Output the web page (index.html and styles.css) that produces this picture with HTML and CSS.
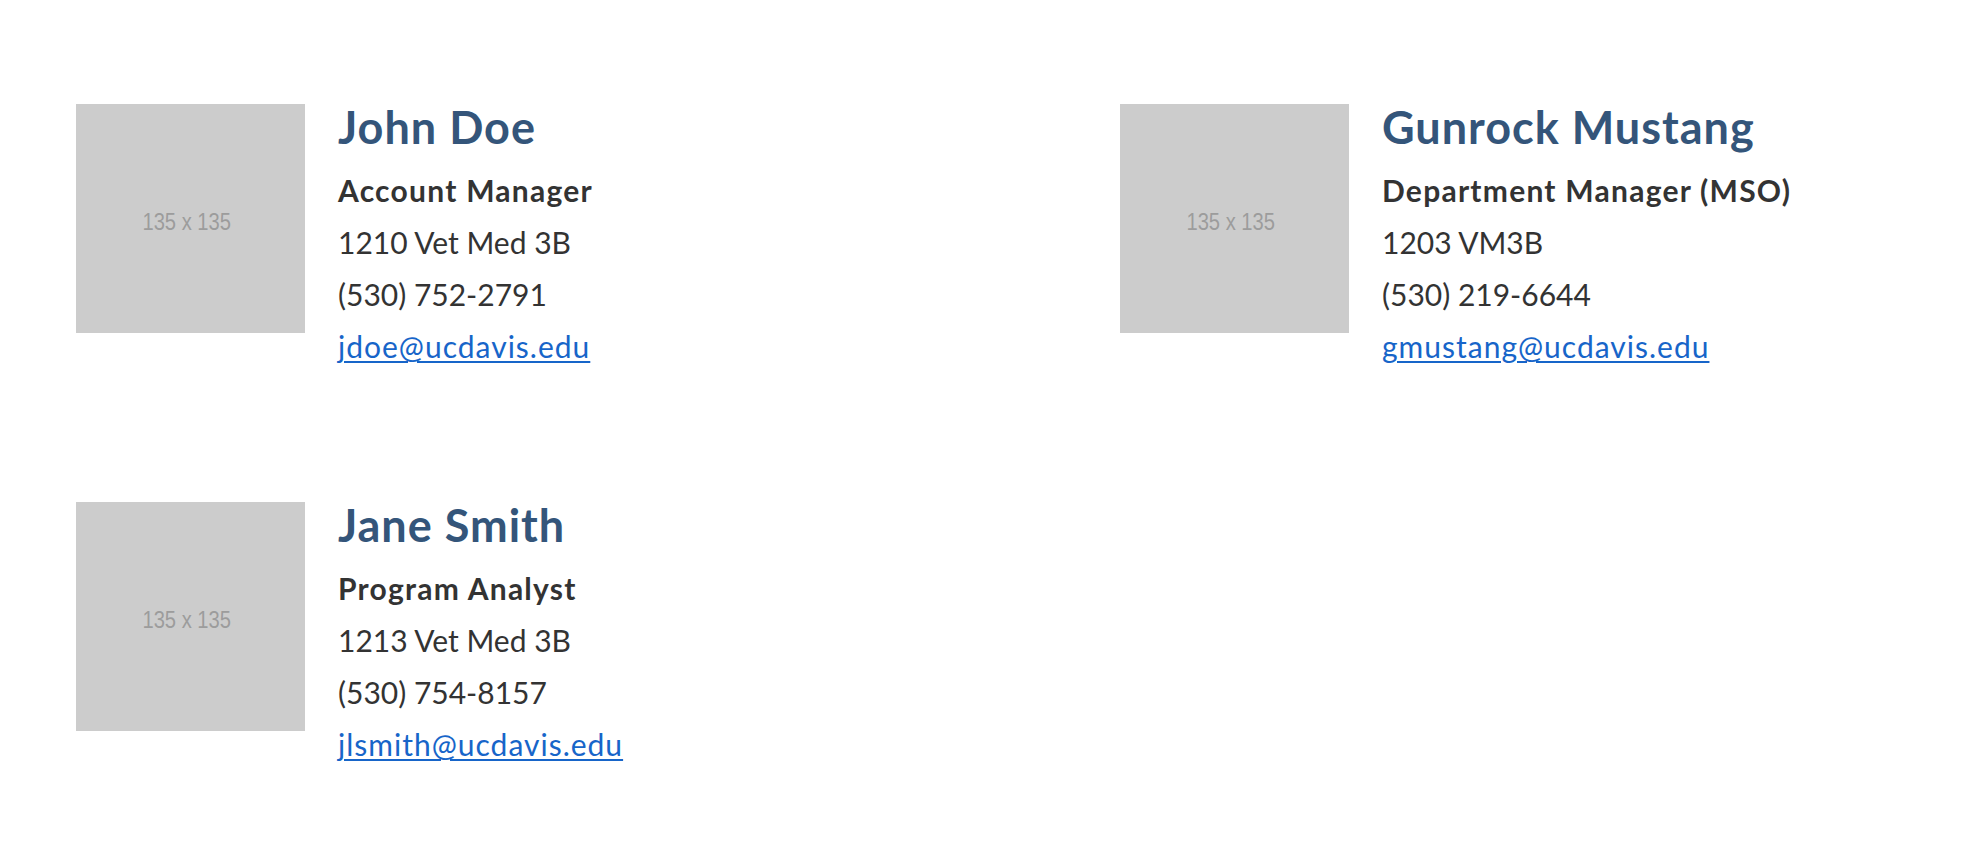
FILE: index.html
```html
<!DOCTYPE html>
<html lang="en">
<head>
<meta charset="utf-8">
<title>People</title>
<link rel="stylesheet" href="styles.css">
</head>
<body>
<main class="people">
  <div class="person">
    <div class="photo"><span class="photo-label">135 x 135</span></div>
    <div class="info">
      <h2 class="name">John Doe</h2>
      <p class="title">Account Manager</p>
      <p class="line">1210 Vet Med 3B</p>
      <p class="line">(530) 752-2791</p>
      <p class="line"><a class="email" href="#">jdoe@ucdavis.edu</a></p>
    </div>
  </div>
  <div class="person">
    <div class="photo"><span class="photo-label">135 x 135</span></div>
    <div class="info">
      <h2 class="name">Gunrock Mustang</h2>
      <p class="title">Department Manager (MSO)</p>
      <p class="line">1203 VM3B</p>
      <p class="line">(530) 219-6644</p>
      <p class="line"><a class="email" href="#">gmustang@ucdavis.edu</a></p>
    </div>
  </div>
  <div class="person">
    <div class="photo"><span class="photo-label">135 x 135</span></div>
    <div class="info">
      <h2 class="name">Jane Smith</h2>
      <p class="title">Program Analyst</p>
      <p class="line">1213 Vet Med 3B</p>
      <p class="line">(530) 754-8157</p>
      <p class="line"><a class="email" href="#">jlsmith@ucdavis.edu</a></p>
    </div>
  </div>
</main>
</body>
</html>
```
FILE: styles.css
```css
html, body {
  margin: 0;
  padding: 0;
  background: #ffffff;
}

body {
  font-family: "Lato", "Noto Sans", sans-serif;
  color: #333333;
  font-size: 30px;
  line-height: 52px;
}

.people {
  display: grid;
  grid-template-columns: 1044px 1fr;
  row-gap: 130px;
  padding: 104px 0 0 76px;
  align-items: start;
}

.person {
  display: flex;
  align-items: flex-start;
  gap: 33px;
}

.photo {
  flex: 0 0 auto;
  width: 229px;
  height: 229px;
  background: #cccccc;
  display: flex;
  align-items: center;
  justify-content: center;
  padding: 6px 7px 0 0;
  box-sizing: border-box;
}

.photo-label {
  font-family: "Liberation Sans", Arial, sans-serif;
  font-size: 24px;
  line-height: 1;
  color: #9c9c9c;
  transform: scaleX(0.84);
  white-space: nowrap;
}

.info {
  display: flex;
  flex-direction: column;
}

.name {
  margin: 0 0 14px;
  font-size: 45px;
  line-height: 46px;
  font-weight: 700;
  letter-spacing: 1px;
  color: #34557a;
  white-space: nowrap;
}

.title {
  margin: 0;
  font-weight: 700;
  letter-spacing: 1.25px;
  white-space: nowrap;
}

.line {
  margin: 0;
  white-space: nowrap;
}

.email {
  color: #1765c9;
  letter-spacing: 1px;
  text-decoration: underline;
  text-decoration-thickness: 2px;
  text-underline-offset: 3px;
}
```
